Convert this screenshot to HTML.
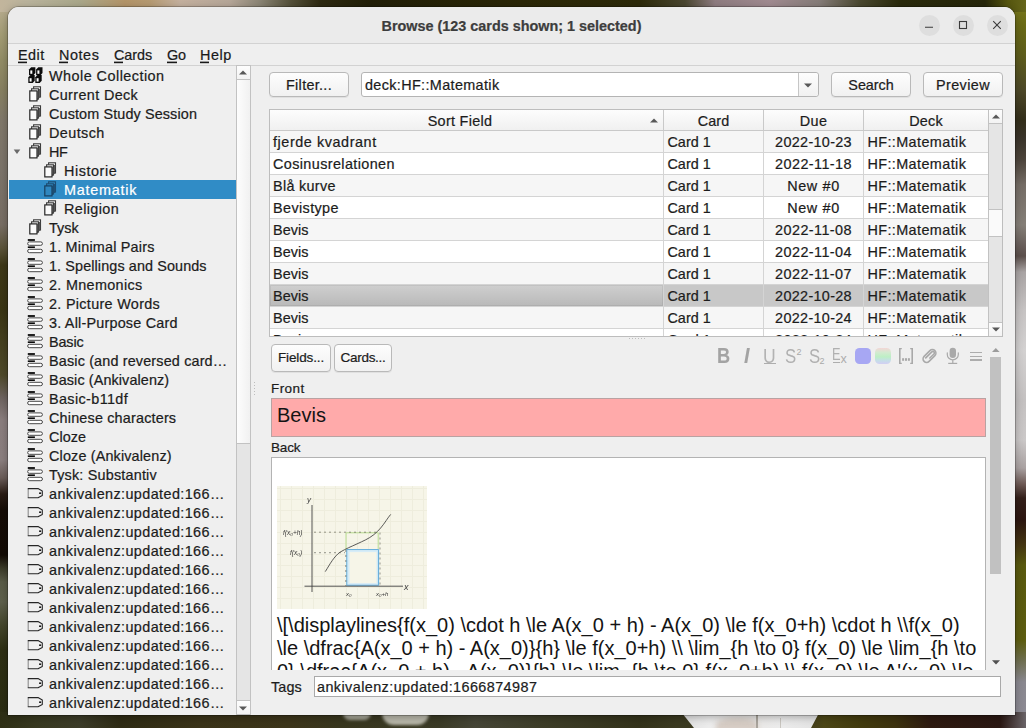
<!DOCTYPE html>
<html lang="en"><head><meta charset="utf-8"><title>Browse (123 cards shown; 1 selected)</title>
<style>
*{box-sizing:border-box;margin:0;padding:0}
html,body{width:1026px;height:728px;overflow:hidden}
body{position:relative;background:#2b2a14;font-family:"Liberation Sans",sans-serif;font-size:14.4px;color:#1c1c1c;line-height:19px;-webkit-text-stroke:.22px currentColor}
.abs,.bg div,.win div,.win span.a,.win svg{position:absolute}
.bg{position:absolute;left:0;top:0;width:1026px;height:728px;overflow:hidden}
.win{position:absolute;left:8px;top:7px;width:1007px;height:708px;background:#efefef;border-radius:11px 11px 0 0;box-shadow:0 0 0 1px rgba(0,0,0,.22),0 2px 9px rgba(0,0,0,.3);overflow:hidden}
.tb{left:0;top:0;width:1007px;height:37px;background:#ebebeb;border-bottom:1px solid #d2d2d2}
.ttl{left:0;top:0;width:1007px;height:36px;line-height:37px;text-align:center;font-weight:700;color:#3d3d3d;white-space:pre}
.wb{width:21px;height:21px;border-radius:50%;background:#dedede;top:7.6px}
.mi{top:38px;height:20px;line-height:20px;white-space:pre;color:#1a1a1a}
.mi u{text-decoration-thickness:1.3px;text-underline-offset:1.5px}
.hl{left:0;top:58px;width:1007px;height:1px;background:#d2d2d2}
.sb{left:1px;top:59px;width:227px;height:649px;overflow:hidden;white-space:nowrap}
.r{left:0;width:227px;height:19px;line-height:19px}
.r.sel{background:#308cc6;color:#fff}
.r span{position:absolute;top:1px;white-space:pre}
.btn{border:1px solid #b9b9b9;border-radius:4px;background:linear-gradient(#fdfdfd,#f1f1f1);text-align:center;white-space:pre;box-shadow:0 1px 0 rgba(0,0,0,.06)}
.inp{border:1px solid #b4b4b4;border-radius:3px;background:#fff;white-space:pre}
.th{top:0;height:21px;line-height:21px;text-align:center;background:linear-gradient(#fdfdfd,#f0f0f0);border-right:1px solid #c9c9c9;border-bottom:1px solid #c9c9c9;white-space:pre}
.tr{left:0;width:718px;height:22px;line-height:21px;border-bottom:1px solid #d4d4d4;white-space:pre}
.tr div{top:0;height:21px;border-right:1px solid #d4d4d4;overflow:hidden}
.sbar{background:#e5e5e5;border:1px solid #c2c2c2}
.sbtn{background:linear-gradient(#fdfdfd,#f3f3f3);border:1px solid #c2c2c2}
.lbl{white-space:pre;line-height:19px}
.ti{white-space:pre;line-height:22px;-webkit-text-stroke:0}
.ed{-webkit-text-stroke:0;font-size:20px;line-height:23px;color:#141414;font-family:"Liberation Sans",sans-serif}
</style></head><body>

<div class="bg">
<div style="left:0;top:10px;width:14px;height:718px;background:linear-gradient(180deg,#b5aa8c 0,#a39c74 25px,#938d66 50px,#878061 80px,#80786a 110px,#7c746a 160px,#786e64 215px,#5c543a 238px,#3e3818 255px,#3a3514 300px,#464120 335px,#4f4a2a 365px,#6e6460 388px,#8a7e7e 410px,#8b7f7f 450px,#6a5c58 468px,#2a1c14 484px,#150c06 500px,#130b05 545px,#3a3a28 558px,#5a5c48 572px,#5e604c 592px,#44462c 615px,#2e2f14 640px,#2b2c12 718px)"></div>
<div style="left:1012px;top:10px;width:14px;height:718px;background:linear-gradient(180deg,#74741a 0,#6a6a16 15px,#5e5d1c 45px,#4d4828 80px,#332e1a 110px,#3a342a 128px,#4d453c 150px,#756d66 175px,#857f78 215px,#6a605c 235px,#5c504c 246px,#a9a4a4 262px,#c6c3c3 300px,#d3d1d1 340px,#c4c1c1 390px,#cbc8c8 430px,#aaa2a2 458px,#6e5a55 474px,#34201a 488px,#2c1610 510px,#453612 535px,#59590f 555px,#5d5d10 630px,#6e6e4e 650px,#8a8890 672px,#8d8b95 718px)"></div>
<div style="left:0;top:0;width:1026px;height:12px;background:linear-gradient(90deg,#c2b59c 0,#b9b39c 30px,#a9a78a 80px,#b39468 125px,#b59a72 150px,#c4b09e 180px,#b5a698 230px,#8a8474 260px,#55513a 290px,#2e2a12 320px,#221f08 370px,#2b2707 520px,#2d2a0a 640px,#4a4630 685px,#8e7c80 715px,#a08a90 770px,#857c78 820px,#4a4830 860px,#2a2a0c 900px,#26260a 985px,#55550f 1008px,#66661a 1026px)"></div>
<div style="left:0;top:712px;width:1026px;height:16px;background:linear-gradient(90deg,#2e2f15 0,#37381f 35px,#3b3b28 80px,#2e2b14 120px,#3a3318 200px,#3c351a 290px,#38361e 340px,#3a3a26 440px,#454536 475px,#3d3d28 540px,#33321a 640px,#3a3920 676px,#3d3a1c 760px,#46411a 815px,#4c4616 824px,#423b0e 860px,#3c320e 895px,#2e1a10 930px,#2a1712 1000px,#6a6468 1026px)"></div>
<div style="left:680px;top:713px;width:142px;height:15px;background:linear-gradient(90deg,#dedede,#ececec 20%,#e9e7e5 50%,#ebebeb 70%,#e2e2e2);clip-path:polygon(2px 0,139px 0,131px 100%,14px 100%);filter:blur(.7px)"></div>
<div style="left:716px;top:718px;width:42px;height:14px;border-radius:50% 50% 0 0;background:#d6ccc4;filter:blur(2.5px)"></div>
<div style="left:756px;top:714px;width:1.6px;height:14px;background:#a9a49c;filter:blur(.6px)"></div>
<div style="left:780px;top:718px;width:1.4px;height:10px;background:#c9c6c0;filter:blur(.6px)"></div>
<div style="left:343px;top:713px;width:28px;height:7px;border-radius:0 0 14px 14px;background:#a5a496;filter:blur(1.6px)"></div>
<div style="left:382px;top:713px;width:47px;height:12px;border-radius:0 0 24px 24px;background:#b9b8aa;filter:blur(1.6px)"></div>
</div>

<div class="win">
<div class="tb"></div>
<div class="ttl"><span style="position:relative;top:1px;letter-spacing:-0.002px">Browse (123 cards shown; 1 selected)</span></div>
<div class="wb" style="left:910.5px"></div>
<div class="wb" style="left:944.5px"></div>
<div class="wb" style="left:978.5px"></div>
<svg style="left:910px;top:8px" width="90" height="21" viewBox="0 0 90 21"><g stroke="#3a3a3a" stroke-width="1.1" fill="none"><path d="M7 12.2h8"/><rect x="41.5" y="6.5" width="7" height="7"/><path d="M75.2 6.2l7.6 7.6M82.8 6.2l-7.6 7.6"/></g></svg>
<div class="mi" style="left:10px;letter-spacing:0.492px">Edit<div style="left:0;top:16px;width:8.61px;height:3px;background:linear-gradient(rgba(26,26,26,.4) 0 33.3%,#1a1a1a 33.3% 66.6%,rgba(26,26,26,.2) 66.6%)"></div></div>
<div class="mi" style="left:51px;letter-spacing:0.564px">Notes<div style="left:0;top:16px;width:9.41px;height:3px;background:linear-gradient(rgba(26,26,26,.4) 0 33.3%,#1a1a1a 33.3% 66.6%,rgba(26,26,26,.2) 66.6%)"></div></div>
<div class="mi" style="left:106px;letter-spacing:-0.053px">Cards<div style="left:0;top:16px;width:9.41px;height:3px;background:linear-gradient(rgba(26,26,26,.4) 0 33.3%,#1a1a1a 33.3% 66.6%,rgba(26,26,26,.2) 66.6%)"></div></div>
<div class="mi" style="left:159px;letter-spacing:-0.179px">Go<div style="left:0;top:16px;width:10.2px;height:3px;background:linear-gradient(rgba(26,26,26,.4) 0 33.3%,#1a1a1a 33.3% 66.6%,rgba(26,26,26,.2) 66.6%)"></div></div>
<div class="mi" style="left:192px;letter-spacing:0.512px">Help<div style="left:0;top:16px;width:9.41px;height:3px;background:linear-gradient(rgba(26,26,26,.4) 0 33.3%,#1a1a1a 33.3% 66.6%,rgba(26,26,26,.2) 66.6%)"></div></div>
<div class="hl"></div>
<div class="sb">
<div class="r" style="top:0px"><svg style="left:19px;top:1px" width="15" height="17" viewBox="0 0 15 17"><path d="M1 2.5L3.2 0.3H7.4V5.9L5.4 8.2H1z" fill="#0c0c0c"/><rect x="2.3" y="3.4" width="2" height="3.4" fill="#fff"/><path d="M8.1 2.5L10.3 0.3H14.5V5.9L12.5 8.2H8.1z" fill="#0c0c0c"/><rect x="9.4" y="3.4" width="2" height="3.4" fill="#fff"/><path d="M0.3 10.3L2.5 8.1H6.7V13.7L4.7 16.0H0.3z" fill="#0c0c0c"/><rect x="1.6" y="11.2" width="2" height="3.4" fill="#fff"/><path d="M7.3 10.3L9.5 8.1H13.7V13.7L11.7 16.0H7.3z" fill="#0c0c0c"/><rect x="8.6" y="11.2" width="2" height="3.4" fill="#fff"/></svg><span style="left:40px;letter-spacing:0.472px">Whole Collection</span></div>
<div class="r" style="top:19px"><svg style="left:19px;top:0px" width="14" height="17" viewBox="0 -0.5 14 17"><rect x="5.6" y="1.3" width="6.9" height="10.2" fill="#f4f4f4" stroke="#3a3a3a" stroke-width="1.1"/><rect x="3.6" y="3.3" width="6.9" height="10.2" fill="#f4f4f4" stroke="#3a3a3a" stroke-width="1.1"/><path d="M9.4 5.4H10.6V13.6L9.4 14.8zM11.1 3.4h1.3v8.2l-1.3 1.2z" fill="#4a4a4a"/><rect x="1.8" y="5.4" width="7.2" height="10" fill="#fbfbfb" stroke="#262626" stroke-width="1.2"/></svg><span style="left:40px;letter-spacing:0.364px">Current Deck</span></div>
<div class="r" style="top:38px"><svg style="left:19px;top:0px" width="14" height="17" viewBox="0 -0.5 14 17"><rect x="5.6" y="1.3" width="6.9" height="10.2" fill="#f4f4f4" stroke="#3a3a3a" stroke-width="1.1"/><rect x="3.6" y="3.3" width="6.9" height="10.2" fill="#f4f4f4" stroke="#3a3a3a" stroke-width="1.1"/><path d="M9.4 5.4H10.6V13.6L9.4 14.8zM11.1 3.4h1.3v8.2l-1.3 1.2z" fill="#4a4a4a"/><rect x="1.8" y="5.4" width="7.2" height="10" fill="#fbfbfb" stroke="#262626" stroke-width="1.2"/></svg><span style="left:40px;letter-spacing:0.122px">Custom Study Session</span></div>
<div class="r" style="top:57px"><svg style="left:19px;top:0px" width="14" height="17" viewBox="0 -0.5 14 17"><rect x="5.6" y="1.3" width="6.9" height="10.2" fill="#f4f4f4" stroke="#3a3a3a" stroke-width="1.1"/><rect x="3.6" y="3.3" width="6.9" height="10.2" fill="#f4f4f4" stroke="#3a3a3a" stroke-width="1.1"/><path d="M9.4 5.4H10.6V13.6L9.4 14.8zM11.1 3.4h1.3v8.2l-1.3 1.2z" fill="#4a4a4a"/><rect x="1.8" y="5.4" width="7.2" height="10" fill="#fbfbfb" stroke="#262626" stroke-width="1.2"/></svg><span style="left:40px;letter-spacing:0.422px">Deutsch</span></div>
<div class="r" style="top:76px"><svg style="left:19px;top:0px" width="14" height="17" viewBox="0 -0.5 14 17"><rect x="5.6" y="1.3" width="6.9" height="10.2" fill="#f4f4f4" stroke="#3a3a3a" stroke-width="1.1"/><rect x="3.6" y="3.3" width="6.9" height="10.2" fill="#f4f4f4" stroke="#3a3a3a" stroke-width="1.1"/><path d="M9.4 5.4H10.6V13.6L9.4 14.8zM11.1 3.4h1.3v8.2l-1.3 1.2z" fill="#4a4a4a"/><rect x="1.8" y="5.4" width="7.2" height="10" fill="#fbfbfb" stroke="#262626" stroke-width="1.2"/></svg><span style="left:40px;letter-spacing:-0.356px">HF</span></div>
<div class="r" style="top:95px"><svg style="left:34px;top:0px" width="14" height="17" viewBox="0 -0.5 14 17"><rect x="5.6" y="1.3" width="6.9" height="10.2" fill="#f4f4f4" stroke="#3a3a3a" stroke-width="1.1"/><rect x="3.6" y="3.3" width="6.9" height="10.2" fill="#f4f4f4" stroke="#3a3a3a" stroke-width="1.1"/><path d="M9.4 5.4H10.6V13.6L9.4 14.8zM11.1 3.4h1.3v8.2l-1.3 1.2z" fill="#4a4a4a"/><rect x="1.8" y="5.4" width="7.2" height="10" fill="#fbfbfb" stroke="#262626" stroke-width="1.2"/></svg><span style="left:55px;letter-spacing:0.553px">Historie</span></div>
<div class="r sel" style="top:114px"><svg style="left:34px;top:0px" width="14" height="17" viewBox="0 -0.5 14 17"><rect x="5.6" y="1.3" width="6.9" height="10.2" fill="#2f87bf" stroke="#1d4d72" stroke-width="1.1"/><rect x="3.6" y="3.3" width="6.9" height="10.2" fill="#2f87bf" stroke="#1d4d72" stroke-width="1.1"/><path d="M9.4 5.4H10.6V13.6L9.4 14.8zM11.1 3.4h1.3v8.2l-1.3 1.2z" fill="#1d4d72"/><rect x="1.8" y="5.4" width="7.2" height="10" fill="#2f87bf" stroke="#173f5e" stroke-width="1.2"/></svg><span style="left:55px;letter-spacing:0.751px">Matematik</span></div>
<div class="r" style="top:133px"><svg style="left:34px;top:0px" width="14" height="17" viewBox="0 -0.5 14 17"><rect x="5.6" y="1.3" width="6.9" height="10.2" fill="#f4f4f4" stroke="#3a3a3a" stroke-width="1.1"/><rect x="3.6" y="3.3" width="6.9" height="10.2" fill="#f4f4f4" stroke="#3a3a3a" stroke-width="1.1"/><path d="M9.4 5.4H10.6V13.6L9.4 14.8zM11.1 3.4h1.3v8.2l-1.3 1.2z" fill="#4a4a4a"/><rect x="1.8" y="5.4" width="7.2" height="10" fill="#fbfbfb" stroke="#262626" stroke-width="1.2"/></svg><span style="left:55px;letter-spacing:0.392px">Religion</span></div>
<div class="r" style="top:152px"><svg style="left:19px;top:0px" width="14" height="17" viewBox="0 -0.5 14 17"><rect x="5.6" y="1.3" width="6.9" height="10.2" fill="#f4f4f4" stroke="#3a3a3a" stroke-width="1.1"/><rect x="3.6" y="3.3" width="6.9" height="10.2" fill="#f4f4f4" stroke="#3a3a3a" stroke-width="1.1"/><path d="M9.4 5.4H10.6V13.6L9.4 14.8zM11.1 3.4h1.3v8.2l-1.3 1.2z" fill="#4a4a4a"/><rect x="1.8" y="5.4" width="7.2" height="10" fill="#fbfbfb" stroke="#262626" stroke-width="1.2"/></svg><span style="left:40px;letter-spacing:-0.003px">Tysk</span></div>
<div class="r" style="top:171px"><svg style="left:18px;top:2px" width="16" height="15" viewBox="-0.1 -0.1 16 15"><rect x=".7" y="0" width="7.1" height="1.8" fill="#0a0a0a"/><rect x=".55" y="2.8" width="14.8" height="3.4" rx="1.7" fill="#fff" stroke="#484848" stroke-width="1"/><rect x=".7" y="7.3" width="7.1" height="1.6" fill="#0a0a0a"/><rect x=".55" y="10.2" width="14.8" height="3.4" rx="1.7" fill="#fff" stroke="#484848" stroke-width="1"/></svg><span style="left:40px;letter-spacing:0.2px">1. Minimal Pairs</span></div>
<div class="r" style="top:190px"><svg style="left:18px;top:2px" width="16" height="15" viewBox="-0.1 -0.1 16 15"><rect x=".7" y="0" width="7.1" height="1.8" fill="#0a0a0a"/><rect x=".55" y="2.8" width="14.8" height="3.4" rx="1.7" fill="#fff" stroke="#484848" stroke-width="1"/><rect x=".7" y="7.3" width="7.1" height="1.6" fill="#0a0a0a"/><rect x=".55" y="10.2" width="14.8" height="3.4" rx="1.7" fill="#fff" stroke="#484848" stroke-width="1"/></svg><span style="left:40px;letter-spacing:0.107px">1. Spellings and Sounds</span></div>
<div class="r" style="top:209px"><svg style="left:18px;top:2px" width="16" height="15" viewBox="-0.1 -0.1 16 15"><rect x=".7" y="0" width="7.1" height="1.8" fill="#0a0a0a"/><rect x=".55" y="2.8" width="14.8" height="3.4" rx="1.7" fill="#fff" stroke="#484848" stroke-width="1"/><rect x=".7" y="7.3" width="7.1" height="1.6" fill="#0a0a0a"/><rect x=".55" y="10.2" width="14.8" height="3.4" rx="1.7" fill="#fff" stroke="#484848" stroke-width="1"/></svg><span style="left:40px;letter-spacing:0.326px">2. Mnemonics</span></div>
<div class="r" style="top:228px"><svg style="left:18px;top:2px" width="16" height="15" viewBox="-0.1 -0.1 16 15"><rect x=".7" y="0" width="7.1" height="1.8" fill="#0a0a0a"/><rect x=".55" y="2.8" width="14.8" height="3.4" rx="1.7" fill="#fff" stroke="#484848" stroke-width="1"/><rect x=".7" y="7.3" width="7.1" height="1.6" fill="#0a0a0a"/><rect x=".55" y="10.2" width="14.8" height="3.4" rx="1.7" fill="#fff" stroke="#484848" stroke-width="1"/></svg><span style="left:40px;letter-spacing:0.313px">2. Picture Words</span></div>
<div class="r" style="top:247px"><svg style="left:18px;top:2px" width="16" height="15" viewBox="-0.1 -0.1 16 15"><rect x=".7" y="0" width="7.1" height="1.8" fill="#0a0a0a"/><rect x=".55" y="2.8" width="14.8" height="3.4" rx="1.7" fill="#fff" stroke="#484848" stroke-width="1"/><rect x=".7" y="7.3" width="7.1" height="1.6" fill="#0a0a0a"/><rect x=".55" y="10.2" width="14.8" height="3.4" rx="1.7" fill="#fff" stroke="#484848" stroke-width="1"/></svg><span style="left:40px;letter-spacing:0.207px">3. All-Purpose Card</span></div>
<div class="r" style="top:266px"><svg style="left:18px;top:2px" width="16" height="15" viewBox="-0.1 -0.1 16 15"><rect x=".7" y="0" width="7.1" height="1.8" fill="#0a0a0a"/><rect x=".55" y="2.8" width="14.8" height="3.4" rx="1.7" fill="#fff" stroke="#484848" stroke-width="1"/><rect x=".7" y="7.3" width="7.1" height="1.6" fill="#0a0a0a"/><rect x=".55" y="10.2" width="14.8" height="3.4" rx="1.7" fill="#fff" stroke="#484848" stroke-width="1"/></svg><span style="left:40px;letter-spacing:-0.124px">Basic</span></div>
<div class="r" style="top:285px"><svg style="left:18px;top:2px" width="16" height="15" viewBox="-0.1 -0.1 16 15"><rect x=".7" y="0" width="7.1" height="1.8" fill="#0a0a0a"/><rect x=".55" y="2.8" width="14.8" height="3.4" rx="1.7" fill="#fff" stroke="#484848" stroke-width="1"/><rect x=".7" y="7.3" width="7.1" height="1.6" fill="#0a0a0a"/><rect x=".55" y="10.2" width="14.8" height="3.4" rx="1.7" fill="#fff" stroke="#484848" stroke-width="1"/></svg><span style="left:40px;letter-spacing:0.158px">Basic (and reversed card…</span></div>
<div class="r" style="top:304px"><svg style="left:18px;top:2px" width="16" height="15" viewBox="-0.1 -0.1 16 15"><rect x=".7" y="0" width="7.1" height="1.8" fill="#0a0a0a"/><rect x=".55" y="2.8" width="14.8" height="3.4" rx="1.7" fill="#fff" stroke="#484848" stroke-width="1"/><rect x=".7" y="7.3" width="7.1" height="1.6" fill="#0a0a0a"/><rect x=".55" y="10.2" width="14.8" height="3.4" rx="1.7" fill="#fff" stroke="#484848" stroke-width="1"/></svg><span style="left:40px;letter-spacing:0.103px">Basic (Ankivalenz)</span></div>
<div class="r" style="top:323px"><svg style="left:18px;top:2px" width="16" height="15" viewBox="-0.1 -0.1 16 15"><rect x=".7" y="0" width="7.1" height="1.8" fill="#0a0a0a"/><rect x=".55" y="2.8" width="14.8" height="3.4" rx="1.7" fill="#fff" stroke="#484848" stroke-width="1"/><rect x=".7" y="7.3" width="7.1" height="1.6" fill="#0a0a0a"/><rect x=".55" y="10.2" width="14.8" height="3.4" rx="1.7" fill="#fff" stroke="#484848" stroke-width="1"/></svg><span style="left:40px;letter-spacing:0.378px">Basic-b11df</span></div>
<div class="r" style="top:342px"><svg style="left:18px;top:2px" width="16" height="15" viewBox="-0.1 -0.1 16 15"><rect x=".7" y="0" width="7.1" height="1.8" fill="#0a0a0a"/><rect x=".55" y="2.8" width="14.8" height="3.4" rx="1.7" fill="#fff" stroke="#484848" stroke-width="1"/><rect x=".7" y="7.3" width="7.1" height="1.6" fill="#0a0a0a"/><rect x=".55" y="10.2" width="14.8" height="3.4" rx="1.7" fill="#fff" stroke="#484848" stroke-width="1"/></svg><span style="left:40px;letter-spacing:0.181px">Chinese characters</span></div>
<div class="r" style="top:361px"><svg style="left:18px;top:2px" width="16" height="15" viewBox="-0.1 -0.1 16 15"><rect x=".7" y="0" width="7.1" height="1.8" fill="#0a0a0a"/><rect x=".55" y="2.8" width="14.8" height="3.4" rx="1.7" fill="#fff" stroke="#484848" stroke-width="1"/><rect x=".7" y="7.3" width="7.1" height="1.6" fill="#0a0a0a"/><rect x=".55" y="10.2" width="14.8" height="3.4" rx="1.7" fill="#fff" stroke="#484848" stroke-width="1"/></svg><span style="left:40px;letter-spacing:0.05px">Cloze</span></div>
<div class="r" style="top:380px"><svg style="left:18px;top:2px" width="16" height="15" viewBox="-0.1 -0.1 16 15"><rect x=".7" y="0" width="7.1" height="1.8" fill="#0a0a0a"/><rect x=".55" y="2.8" width="14.8" height="3.4" rx="1.7" fill="#fff" stroke="#484848" stroke-width="1"/><rect x=".7" y="7.3" width="7.1" height="1.6" fill="#0a0a0a"/><rect x=".55" y="10.2" width="14.8" height="3.4" rx="1.7" fill="#fff" stroke="#484848" stroke-width="1"/></svg><span style="left:40px;letter-spacing:0.151px">Cloze (Ankivalenz)</span></div>
<div class="r" style="top:399px"><svg style="left:18px;top:2px" width="16" height="15" viewBox="-0.1 -0.1 16 15"><rect x=".7" y="0" width="7.1" height="1.8" fill="#0a0a0a"/><rect x=".55" y="2.8" width="14.8" height="3.4" rx="1.7" fill="#fff" stroke="#484848" stroke-width="1"/><rect x=".7" y="7.3" width="7.1" height="1.6" fill="#0a0a0a"/><rect x=".55" y="10.2" width="14.8" height="3.4" rx="1.7" fill="#fff" stroke="#484848" stroke-width="1"/></svg><span style="left:40px;letter-spacing:0.194px">Tysk: Substantiv</span></div>
<div class="r" style="top:418px"><svg style="left:18px;top:3px" width="16" height="12" viewBox="-0.3 -0.8 16 12"><path d="M.9 10V.8" fill="none" stroke="#8e8e8e" stroke-width="1.1"/><path d="M.5.8h10.2L15 3.1v4.7L10.7 10H.5" fill="none" stroke="#262626" stroke-width="1.1" stroke-linejoin="round"/><rect x="11.8" y="4.6" width="2" height="1.6" fill="#1a1a1a"/></svg><span style="left:40px;letter-spacing:0.405px">ankivalenz:updated:166…</span></div>
<div class="r" style="top:437px"><svg style="left:18px;top:3px" width="16" height="12" viewBox="-0.3 -0.8 16 12"><path d="M.9 10V.8" fill="none" stroke="#8e8e8e" stroke-width="1.1"/><path d="M.5.8h10.2L15 3.1v4.7L10.7 10H.5" fill="none" stroke="#262626" stroke-width="1.1" stroke-linejoin="round"/><rect x="11.8" y="4.6" width="2" height="1.6" fill="#1a1a1a"/></svg><span style="left:40px;letter-spacing:0.405px">ankivalenz:updated:166…</span></div>
<div class="r" style="top:456px"><svg style="left:18px;top:3px" width="16" height="12" viewBox="-0.3 -0.8 16 12"><path d="M.9 10V.8" fill="none" stroke="#8e8e8e" stroke-width="1.1"/><path d="M.5.8h10.2L15 3.1v4.7L10.7 10H.5" fill="none" stroke="#262626" stroke-width="1.1" stroke-linejoin="round"/><rect x="11.8" y="4.6" width="2" height="1.6" fill="#1a1a1a"/></svg><span style="left:40px;letter-spacing:0.405px">ankivalenz:updated:166…</span></div>
<div class="r" style="top:475px"><svg style="left:18px;top:3px" width="16" height="12" viewBox="-0.3 -0.8 16 12"><path d="M.9 10V.8" fill="none" stroke="#8e8e8e" stroke-width="1.1"/><path d="M.5.8h10.2L15 3.1v4.7L10.7 10H.5" fill="none" stroke="#262626" stroke-width="1.1" stroke-linejoin="round"/><rect x="11.8" y="4.6" width="2" height="1.6" fill="#1a1a1a"/></svg><span style="left:40px;letter-spacing:0.405px">ankivalenz:updated:166…</span></div>
<div class="r" style="top:494px"><svg style="left:18px;top:3px" width="16" height="12" viewBox="-0.3 -0.8 16 12"><path d="M.9 10V.8" fill="none" stroke="#8e8e8e" stroke-width="1.1"/><path d="M.5.8h10.2L15 3.1v4.7L10.7 10H.5" fill="none" stroke="#262626" stroke-width="1.1" stroke-linejoin="round"/><rect x="11.8" y="4.6" width="2" height="1.6" fill="#1a1a1a"/></svg><span style="left:40px;letter-spacing:0.405px">ankivalenz:updated:166…</span></div>
<div class="r" style="top:513px"><svg style="left:18px;top:3px" width="16" height="12" viewBox="-0.3 -0.8 16 12"><path d="M.9 10V.8" fill="none" stroke="#8e8e8e" stroke-width="1.1"/><path d="M.5.8h10.2L15 3.1v4.7L10.7 10H.5" fill="none" stroke="#262626" stroke-width="1.1" stroke-linejoin="round"/><rect x="11.8" y="4.6" width="2" height="1.6" fill="#1a1a1a"/></svg><span style="left:40px;letter-spacing:0.405px">ankivalenz:updated:166…</span></div>
<div class="r" style="top:532px"><svg style="left:18px;top:3px" width="16" height="12" viewBox="-0.3 -0.8 16 12"><path d="M.9 10V.8" fill="none" stroke="#8e8e8e" stroke-width="1.1"/><path d="M.5.8h10.2L15 3.1v4.7L10.7 10H.5" fill="none" stroke="#262626" stroke-width="1.1" stroke-linejoin="round"/><rect x="11.8" y="4.6" width="2" height="1.6" fill="#1a1a1a"/></svg><span style="left:40px;letter-spacing:0.405px">ankivalenz:updated:166…</span></div>
<div class="r" style="top:551px"><svg style="left:18px;top:3px" width="16" height="12" viewBox="-0.3 -0.8 16 12"><path d="M.9 10V.8" fill="none" stroke="#8e8e8e" stroke-width="1.1"/><path d="M.5.8h10.2L15 3.1v4.7L10.7 10H.5" fill="none" stroke="#262626" stroke-width="1.1" stroke-linejoin="round"/><rect x="11.8" y="4.6" width="2" height="1.6" fill="#1a1a1a"/></svg><span style="left:40px;letter-spacing:0.405px">ankivalenz:updated:166…</span></div>
<div class="r" style="top:570px"><svg style="left:18px;top:3px" width="16" height="12" viewBox="-0.3 -0.8 16 12"><path d="M.9 10V.8" fill="none" stroke="#8e8e8e" stroke-width="1.1"/><path d="M.5.8h10.2L15 3.1v4.7L10.7 10H.5" fill="none" stroke="#262626" stroke-width="1.1" stroke-linejoin="round"/><rect x="11.8" y="4.6" width="2" height="1.6" fill="#1a1a1a"/></svg><span style="left:40px;letter-spacing:0.405px">ankivalenz:updated:166…</span></div>
<div class="r" style="top:589px"><svg style="left:18px;top:3px" width="16" height="12" viewBox="-0.3 -0.8 16 12"><path d="M.9 10V.8" fill="none" stroke="#8e8e8e" stroke-width="1.1"/><path d="M.5.8h10.2L15 3.1v4.7L10.7 10H.5" fill="none" stroke="#262626" stroke-width="1.1" stroke-linejoin="round"/><rect x="11.8" y="4.6" width="2" height="1.6" fill="#1a1a1a"/></svg><span style="left:40px;letter-spacing:0.405px">ankivalenz:updated:166…</span></div>
<div class="r" style="top:608px"><svg style="left:18px;top:3px" width="16" height="12" viewBox="-0.3 -0.8 16 12"><path d="M.9 10V.8" fill="none" stroke="#8e8e8e" stroke-width="1.1"/><path d="M.5.8h10.2L15 3.1v4.7L10.7 10H.5" fill="none" stroke="#262626" stroke-width="1.1" stroke-linejoin="round"/><rect x="11.8" y="4.6" width="2" height="1.6" fill="#1a1a1a"/></svg><span style="left:40px;letter-spacing:0.405px">ankivalenz:updated:166…</span></div>
<div class="r" style="top:627px"><svg style="left:18px;top:3px" width="16" height="12" viewBox="-0.3 -0.8 16 12"><path d="M.9 10V.8" fill="none" stroke="#8e8e8e" stroke-width="1.1"/><path d="M.5.8h10.2L15 3.1v4.7L10.7 10H.5" fill="none" stroke="#262626" stroke-width="1.1" stroke-linejoin="round"/><rect x="11.8" y="4.6" width="2" height="1.6" fill="#1a1a1a"/></svg><span style="left:40px;letter-spacing:0.405px">ankivalenz:updated:166…</span></div>
<svg style="left:4px;top:83px" width="8" height="5" viewBox="-0.4 -0.3 8 5"><path d="M.3.3h6.6L3.6 4.6z" fill="#6a6a6a"/></svg>
</div>
<div class="sbar" style="left:228px;top:58px;width:15px;height:650px"></div>
<div class="sbtn" style="left:228px;top:58px;width:15px;height:15px"></div>
<div class="sbtn" style="left:228px;top:72px;width:15px;height:365px;background:linear-gradient(90deg,#fdfdfd,#f1f1f1)"></div>
<div class="sbtn" style="left:228px;top:693px;width:15px;height:15px"></div>
<svg style="left:231.3px;top:63px" width="8" height="5" viewBox="0 0 8 5"><path d="M0 4.6L4 .4l4 4.2z" fill="#585858"/></svg>
<svg style="left:231.3px;top:698.6px" width="8" height="5" viewBox="0 0 8 5"><path d="M0 .4l4 4.2L8 .4z" fill="#585858"/></svg>
<div class="btn" style="left:261px;top:65px;width:80px;height:25px;line-height:23px"><span style="position:relative;top:1px;letter-spacing:0.31px">Filter...</span></div>
<div class="inp" style="left:353px;top:65px;width:458px;height:25px;line-height:22px;padding-left:3px"><span style="position:relative;top:1px;letter-spacing:0.362px">deck:HF::Matematik</span></div>
<div style="left:790px;top:66px;width:20px;height:23px;border-left:1px solid #c6c6c6;background:linear-gradient(#fdfdfd,#f1f1f1);border-radius:0 3px 3px 0"></div>
<svg style="left:796px;top:76px" width="8" height="5" viewBox="0 0 8 5"><path d="M0 .4l4 4.2L8 .4z" fill="#585858"/></svg>
<div class="btn" style="left:823px;top:65px;width:80px;height:25px;line-height:23px"><span style="position:relative;top:1px;letter-spacing:-0.043px">Search</span></div>
<div class="btn" style="left:915px;top:65px;width:80px;height:25px;line-height:23px"><span style="position:relative;top:1px;letter-spacing:0.424px">Preview</span></div>
<div style="left:261px;top:102px;width:734px;height:228px;border:1px solid #bdbdbd;background:#fff;overflow:hidden">
<div class="th" style="left:0px;width:394px;padding-right:13px"><span style="position:relative;top:1px;letter-spacing:0.299px">Sort Field</span></div>
<div class="th" style="left:394px;width:100px"><span style="position:relative;top:1px;letter-spacing:0.093px">Card</span></div>
<div class="th" style="left:494px;width:100px"><span style="position:relative;top:1px;letter-spacing:0.404px">Due</span></div>
<div class="th" style="left:594px;width:125px"><span style="position:relative;top:1px;letter-spacing:0.21px">Deck</span></div>
<svg style="left:380px;top:8px" width="8" height="5" viewBox="0 0 8 5"><path d="M0 4.6L4 .4l4 4.2z" fill="#585858"/></svg>
<div class="tr" style="top:21px;background:#f6f6f6"><div style="left:0;width:394px;padding-left:3px"><span style="position:relative;top:1px;letter-spacing:0.568px">fjerde kvadrant</span></div><div style="left:394px;width:100px;padding-left:3.4px"><span style="position:relative;top:1px;letter-spacing:0.058px">Card 1</span></div><div style="left:494px;width:100px;text-align:center"><span style="position:relative;top:1px;letter-spacing:0.322px">2022-10-23</span></div><div style="left:594px;width:125px;padding-left:3.4px"><span style="position:relative;top:1px;letter-spacing:0.413px">HF::Matematik</span></div></div>
<div class="tr" style="top:43px;background:#fff"><div style="left:0;width:394px;padding-left:3px"><span style="position:relative;top:1px;letter-spacing:0.393px">Cosinusrelationen</span></div><div style="left:394px;width:100px;padding-left:3.4px"><span style="position:relative;top:1px;letter-spacing:0.058px">Card 1</span></div><div style="left:494px;width:100px;text-align:center"><span style="position:relative;top:1px;letter-spacing:0.43px">2022-11-18</span></div><div style="left:594px;width:125px;padding-left:3.4px"><span style="position:relative;top:1px;letter-spacing:0.413px">HF::Matematik</span></div></div>
<div class="tr" style="top:65px;background:#f6f6f6"><div style="left:0;width:394px;padding-left:3px"><span style="position:relative;top:1px;letter-spacing:0.306px">Blå kurve</span></div><div style="left:394px;width:100px;padding-left:3.4px"><span style="position:relative;top:1px;letter-spacing:0.058px">Card 1</span></div><div style="left:494px;width:100px;text-align:center"><span style="position:relative;top:1px;letter-spacing:0.657px">New #0</span></div><div style="left:594px;width:125px;padding-left:3.4px"><span style="position:relative;top:1px;letter-spacing:0.413px">HF::Matematik</span></div></div>
<div class="tr" style="top:87px;background:#fff"><div style="left:0;width:394px;padding-left:3px"><span style="position:relative;top:1px;letter-spacing:0.39px">Bevistype</span></div><div style="left:394px;width:100px;padding-left:3.4px"><span style="position:relative;top:1px;letter-spacing:0.058px">Card 1</span></div><div style="left:494px;width:100px;text-align:center"><span style="position:relative;top:1px;letter-spacing:0.657px">New #0</span></div><div style="left:594px;width:125px;padding-left:3.4px"><span style="position:relative;top:1px;letter-spacing:0.413px">HF::Matematik</span></div></div>
<div class="tr" style="top:109px;background:#f6f6f6"><div style="left:0;width:394px;padding-left:3px"><span style="position:relative;top:1px;letter-spacing:0.063px">Bevis</span></div><div style="left:394px;width:100px;padding-left:3.4px"><span style="position:relative;top:1px;letter-spacing:0.058px">Card 1</span></div><div style="left:494px;width:100px;text-align:center"><span style="position:relative;top:1px;letter-spacing:0.43px">2022-11-08</span></div><div style="left:594px;width:125px;padding-left:3.4px"><span style="position:relative;top:1px;letter-spacing:0.413px">HF::Matematik</span></div></div>
<div class="tr" style="top:131px;background:#fff"><div style="left:0;width:394px;padding-left:3px"><span style="position:relative;top:1px;letter-spacing:0.063px">Bevis</span></div><div style="left:394px;width:100px;padding-left:3.4px"><span style="position:relative;top:1px;letter-spacing:0.058px">Card 1</span></div><div style="left:494px;width:100px;text-align:center"><span style="position:relative;top:1px;letter-spacing:0.43px">2022-11-04</span></div><div style="left:594px;width:125px;padding-left:3.4px"><span style="position:relative;top:1px;letter-spacing:0.413px">HF::Matematik</span></div></div>
<div class="tr" style="top:153px;background:#f6f6f6"><div style="left:0;width:394px;padding-left:3px"><span style="position:relative;top:1px;letter-spacing:0.063px">Bevis</span></div><div style="left:394px;width:100px;padding-left:3.4px"><span style="position:relative;top:1px;letter-spacing:0.058px">Card 1</span></div><div style="left:494px;width:100px;text-align:center"><span style="position:relative;top:1px;letter-spacing:0.43px">2022-11-07</span></div><div style="left:594px;width:125px;padding-left:3.4px"><span style="position:relative;top:1px;letter-spacing:0.413px">HF::Matematik</span></div></div>
<div class="tr" style="top:175px;background:#c8c8c8"><div style="left:0;width:394px;padding-left:3px;background:linear-gradient(#cfcfcf,#b9b9b9);box-shadow:inset 0 0 0 1px rgba(0,0,0,.06)"><span style="position:relative;top:1px;letter-spacing:0.063px">Bevis</span></div><div style="left:394px;width:100px;padding-left:3.4px"><span style="position:relative;top:1px;letter-spacing:0.058px">Card 1</span></div><div style="left:494px;width:100px;text-align:center"><span style="position:relative;top:1px;letter-spacing:0.322px">2022-10-28</span></div><div style="left:594px;width:125px;padding-left:3.4px"><span style="position:relative;top:1px;letter-spacing:0.413px">HF::Matematik</span></div></div>
<div class="tr" style="top:197px;background:#f6f6f6"><div style="left:0;width:394px;padding-left:3px"><span style="position:relative;top:1px;letter-spacing:0.063px">Bevis</span></div><div style="left:394px;width:100px;padding-left:3.4px"><span style="position:relative;top:1px;letter-spacing:0.058px">Card 1</span></div><div style="left:494px;width:100px;text-align:center"><span style="position:relative;top:1px;letter-spacing:0.322px">2022-10-24</span></div><div style="left:594px;width:125px;padding-left:3.4px"><span style="position:relative;top:1px;letter-spacing:0.413px">HF::Matematik</span></div></div>
<div class="tr" style="top:219px;background:#fff"><div style="left:0;width:394px;padding-left:3px"><span style="position:relative;top:1px;letter-spacing:0.063px">Bevis</span></div><div style="left:394px;width:100px;padding-left:3.4px"><span style="position:relative;top:1px;letter-spacing:0.058px">Card 1</span></div><div style="left:494px;width:100px;text-align:center"><span style="position:relative;top:1px;letter-spacing:0.322px">2022-10-24</span></div><div style="left:594px;width:125px;padding-left:3.4px"><span style="position:relative;top:1px;letter-spacing:0.413px">HF::Matematik</span></div></div>
<div class="sbar" style="left:718px;top:-1px;width:15px;height:228px"></div>
<div class="sbtn" style="left:718px;top:-1px;width:15px;height:15px"></div>
<div class="sbtn" style="left:718px;top:99px;width:15px;height:28px;background:#fafafa"></div>
<div class="sbtn" style="left:718px;top:212px;width:15px;height:15px"></div>
<svg style="left:722px;top:4px" width="8" height="5" viewBox="0 0 8 5"><path d="M0 4.6L4 .4l4 4.2z" fill="#585858"/></svg>
<svg style="left:722px;top:217px" width="8" height="5" viewBox="0 0 8 5"><path d="M0 .4l4 4.2L8 .4z" fill="#585858"/></svg>
</div>
<div style="left:621px;top:331px;width:18px;height:1px;background:repeating-linear-gradient(90deg,#bdbdbd 0 1px,transparent 1px 3px)"></div>
<div style="left:246px;top:375px;width:1px;height:13px;background:repeating-linear-gradient(180deg,#bdbdbd 0 1px,transparent 1px 3px)"></div>
<div class="btn" style="left:263px;top:337px;width:60px;height:28px;line-height:24px"><span style="position:relative;top:1px;letter-spacing:-0.13px;font-size:13.5px;top:0">Fields...</span></div>
<div class="btn" style="left:326px;top:337px;width:58px;height:28px;line-height:24px"><span style="position:relative;top:1px;letter-spacing:-0.279px;font-size:13.5px;top:0">Cards...</span></div>

<div class="ti" style="left:709.3px;top:338px;font-size:22px;font-weight:700;color:#a3a3a3;transform:scaleX(.83);transform-origin:0 0">B</div>
<div class="ti" style="left:736px;top:338px;font-size:22px;font-weight:700;font-style:italic;color:#a3a3a3;transform:scaleX(.9);transform-origin:0 0">I</div>
<div class="ti" style="left:755px;top:337.5px;font-size:19.5px;color:#b3b3b3;transform:scaleX(.9);transform-origin:0 0">U</div>
<div style="left:756px;top:356px;width:12px;height:1px;background:#adadad"></div>
<div class="ti" style="left:777px;top:338px;font-size:21px;color:#b0b0b0;transform:scaleX(.8);transform-origin:0 0">S</div>
<div class="ti" style="left:788.5px;top:340px;font-size:9px;color:#a9a9a9;line-height:10px">2</div>
<div class="ti" style="left:800.5px;top:338px;font-size:21px;color:#b0b0b0;transform:scaleX(.8);transform-origin:0 0">S</div>
<div class="ti" style="left:811.5px;top:348.5px;font-size:9px;color:#a9a9a9;line-height:10px">2</div>
<div class="ti" style="left:824px;top:336.5px;font-size:16px;color:#b0b0b0;transform:scaleX(.8);transform-origin:0 0">E</div>
<div style="left:824.8px;top:355px;width:7px;height:1px;background:#adadad"></div>
<div class="ti" style="left:832.5px;top:345px;font-size:12.5px;color:#adadad;line-height:14px">x</div>
<div style="left:847px;top:341px;width:16px;height:16px;border-radius:4.5px;background:#a7a7f3"></div>
<div style="left:867px;top:341px;width:16px;height:16px;border-radius:4.5px;background:linear-gradient(#f3d6d6 0,#d3ead0 28%,#bdefc5 55%,#c6dde9 80%,#d3cff3 100%)"></div>
<svg style="left:891px;top:341px" width="14" height="16" viewBox="0 0 14 16"><g fill="#a9a9a9"><path d="M0 .1h2.8v1.2H1.6v13.4h1.2v1.2H0z"/><path d="M14 .1h-2.8v1.2h1.2v13.4h-1.2v1.2H14z"/><rect x="3.1" y="10.2" width="2" height="2.6"/><rect x="6" y="10.2" width="2" height="2.6"/><rect x="8.9" y="10.2" width="2" height="2.6"/></g></svg>
<svg style="left:913px;top:340px" width="17" height="17" viewBox="0 0 17 17"><g transform="translate(8.5 9) rotate(-45)" fill="none" stroke="#a9a9a9" stroke-width="1.6" stroke-linecap="round"><rect x="-7.6" y="-3.5" width="15.2" height="7" rx="3.5"/><path d="M-4 -1.3H4.6a1.5 1.5 0 0 1 0 3H-1.2"/></g></svg>
<svg style="left:938px;top:340px" width="14" height="18" viewBox="0 0 14 18"><rect x="3.6" y=".8" width="6.4" height="10.2" rx="3.2" fill="#a9a9a9"/><path d="M1.3 5.8v1.6a5.5 5.5 0 0 0 11 0V5.8M6.8 13v2.8" fill="none" stroke="#a9a9a9" stroke-width="1.2" stroke-linecap="round"/><rect x="2.2" y="15.8" width="9" height="1.2" fill="#a9a9a9"/></svg>
<div style="left:962px;top:345px;width:12px;height:1.4px;background:#acacac"></div>
<div style="left:962px;top:348.6px;width:12px;height:1.4px;background:#acacac"></div>
<div style="left:962px;top:352.2px;width:12px;height:1.4px;background:#acacac"></div>

<div class="lbl" style="left:263px;top:372px"><span style="position:relative;top:1px;letter-spacing:0.419px;font-size:13.5px;top:0">Front</span></div>
<div class="ed" style="left:263px;top:391px;width:715px;height:39px;background:#ffaaaa;border:1px solid #b9a2a2;padding:5px 0 0 5px">Bevis</div>
<div class="lbl" style="left:263px;top:431px"><span style="position:relative;top:1px;letter-spacing:-0.191px;font-size:13.5px;top:0">Back</span></div>
<div class="ed" style="left:263px;top:450px;width:715px;height:213px;background:#fff;border:1px solid #b3b3b3;border-bottom:none;overflow:hidden">

<svg style="left:5px;top:28px" width="150" height="123" viewBox="0 0 150 123" font-family="Liberation Sans, sans-serif">
<defs><pattern id="gr" width="11" height="11" patternUnits="userSpaceOnUse" x="4" y="3"><path d="M10.5 0v11M0 10.5h11" stroke="#eeeddd" stroke-width="1" fill="none"/></pattern>
<filter id="sb" x="-5%" y="-5%" width="110%" height="110%"><feGaussianBlur stdDeviation=".28"/></filter></defs>
<rect width="150" height="123" fill="#f6f5e8"/><rect width="150" height="123" fill="url(#gr)"/>
<g filter="url(#sb)">
<rect x="71" y="64.6" width="30" height="34" fill="#f6f5e8" stroke="#d6ecf7" stroke-width="3"/>
<path d="M69 63.8V46.8h32.2V63" fill="none" stroke="#b9dc90" stroke-width="1"/>
<rect x="69.8" y="63.6" width="31.6" height="35.6" fill="none" stroke="#58a6d8" stroke-width=".9"/>
<path d="M35 19V106M27.5 100.2H126" stroke="#404040" stroke-width=".9" fill="none"/>
<path d="M48.3 85.6C53 78 57 70.5 63 66.2c6-3.6 11-5.5 17-8.3 6-2.8 11.5-5 16.8-9.2 5-4 9-9 12.5-14.3 1.6-2.3 3-4.4 4.4-6" fill="none" stroke="#333" stroke-width=".8"/>
<path d="M37 46.2H101.5M37 66.7H68M68.8 64V100M103 46.5V100" fill="none" stroke="#55564c" stroke-width=".6" stroke-dasharray="2 3"/>
<g fill="#3a3a3a" font-size="6.5" font-style="italic">
<text x="30" y="16" font-size="8">y</text><text x="127" y="103.5" font-size="9">x</text>
<text x="6" y="48.5">f(x₀+h)</text><text x="13" y="69">f(x₀)</text>
<text x="69" y="110" font-size="6">x₀</text><text x="99" y="110" font-size="6">x₀+h</text></g>
</g></svg>

<div class="ed" style="left:5px;top:156px;width:705px;white-space:normal">\[\displaylines{f(x_0) \cdot h \le A(x_0 + h) - A(x_0) \le f(x_0+h) \cdot h \\f(x_0) \le \dfrac{A(x_0 + h) - A(x_0)}{h} \le f(x_0+h) \\ \lim_{h \to 0} f(x_0) \le \lim_{h \to 0} \dfrac{A(x_0 + h) - A(x_0)}{h} \le \lim_{h \to 0} f(x_0+h) \\ f(x_0) \le A'(x_0) \le f(x_0) \\ A'(x_0) = f(x_0)}\]</div>
</div>
<div style="left:982px;top:350px;width:11px;height:217px;background:#c1c1c1"></div>
<svg style="left:983.8px;top:341.2px" width="8" height="4" viewBox="0 0 8 4"><path d="M0 4L3.8 .1 7.6 4z" fill="#9c9c9c"/></svg>
<svg style="left:984px;top:653px" width="8" height="5" viewBox="0 0 8 5"><path d="M0 .2l4 4.4L8 .2z" fill="#505050"/></svg>
<div class="lbl" style="left:263px;top:670px"><span style="position:relative;top:1px;letter-spacing:0.099px">Tags</span></div>
<div class="inp" style="left:306px;top:669px;width:687px;height:21px;line-height:19px;padding-left:2px;border-radius:0;border-color:#a9a9a9"><span style="position:relative;top:1px;letter-spacing:0.423px">ankivalenz:updated:1666874987</span></div>
</div></body></html>
